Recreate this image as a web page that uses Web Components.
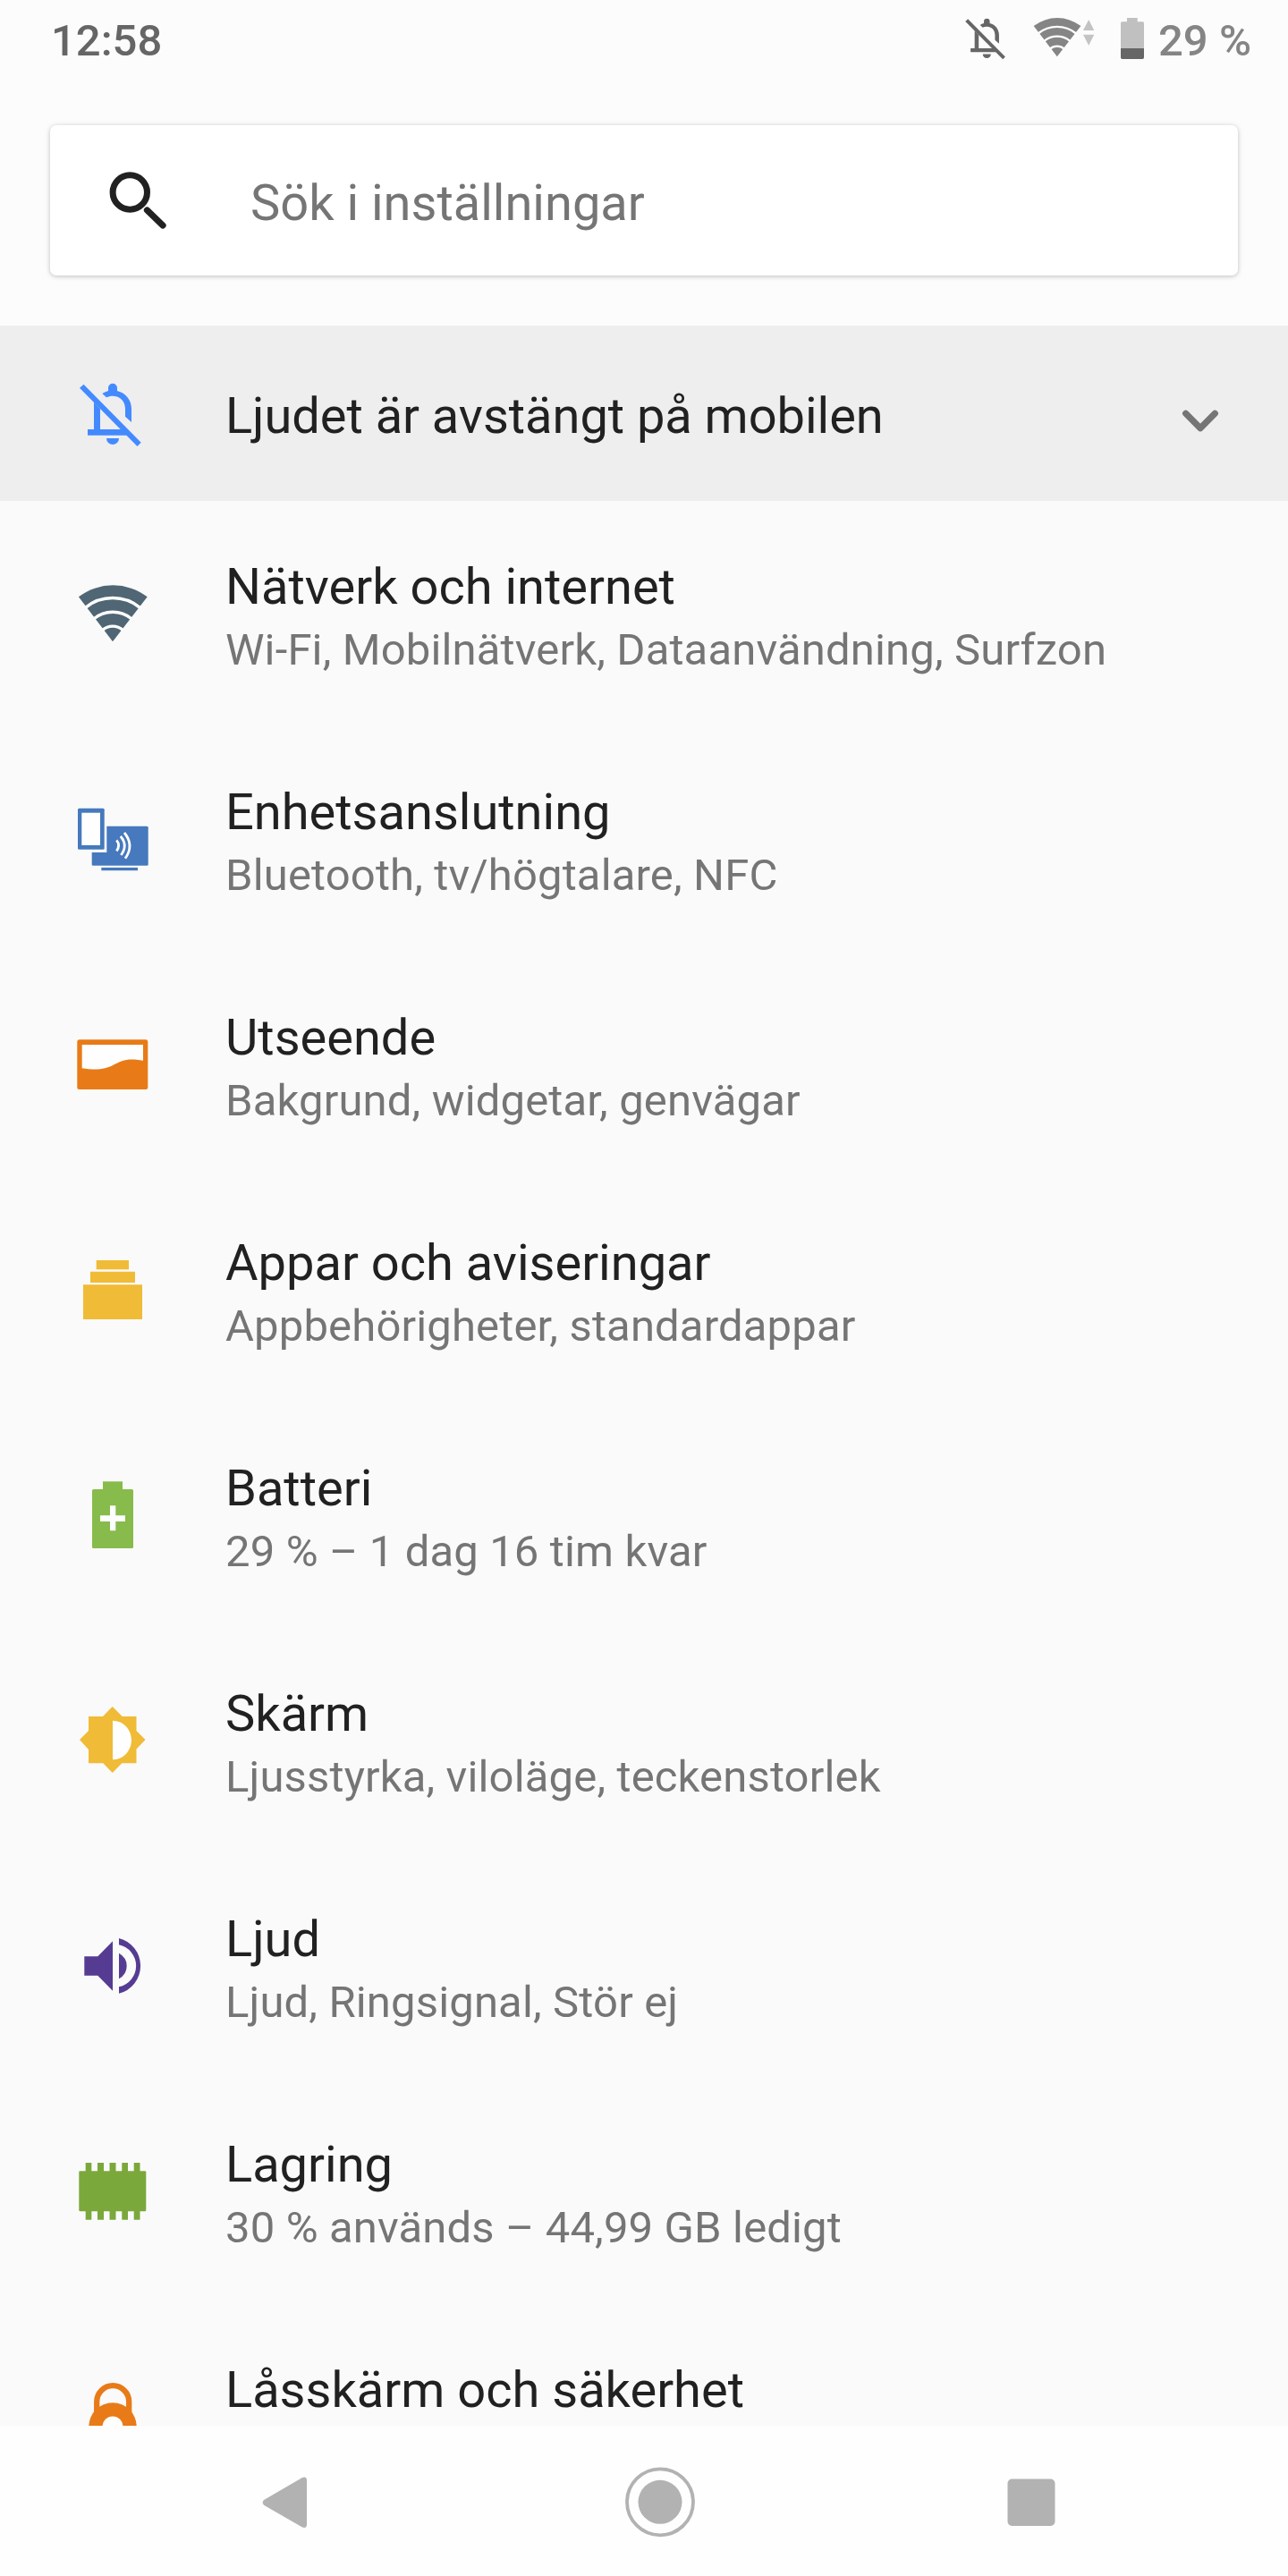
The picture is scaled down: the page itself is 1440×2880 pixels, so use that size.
<!DOCTYPE html>
<html lang="sv">
<head>
<meta charset="utf-8">
<title>Inställningar</title>
<style>
  html, body {
    margin: 0;
    padding: 0;
  }

  body {
    width: 1440px;
    height: 2880px;
    overflow: hidden;
    background: #fafafa;
    font-family: Roboto, "Noto Sans", sans-serif;
  }
</style>
</head>
<body>
<settings-screen>
  <status-bar slot="status" time="12:58" battery="29 %"></status-bar>
  <search-field slot="search">Sök i inställningar</search-field>
  <condition-banner slot="banner">Ljudet är avstängt på mobilen</condition-banner>

  <settings-row icon="wifi" color="#506675">Nätverk och internet<span slot="summary">Wi-Fi, Mobilnätverk, Dataanvändning, Surfzon</span></settings-row>
  <settings-row icon="devices" color="#4679bd">Enhetsanslutning<span slot="summary">Bluetooth, tv/högtalare, NFC</span></settings-row>
  <settings-row icon="wallpaper" color="#e87b17">Utseende<span slot="summary">Bakgrund, widgetar, genvägar</span></settings-row>
  <settings-row icon="apps" color="#f0bb36">Appar och aviseringar<span slot="summary">Appbehörigheter, standardappar</span></settings-row>
  <settings-row icon="battery" color="#87bb4b">Batteri<span slot="summary">29 % – 1 dag 16 tim kvar</span></settings-row>
  <settings-row icon="display" color="#f0bb36">Skärm<span slot="summary">Ljusstyrka, viloläge, teckenstorlek</span></settings-row>
  <settings-row icon="volume" color="#553c92">Ljud<span slot="summary">Ljud, Ringsignal, Stör ej</span></settings-row>
  <settings-row icon="storage" color="#7ba83b">Lagring<span slot="summary">30 % används – 44,99 GB ledigt</span></settings-row>
  <settings-row icon="lock" color="#e87b17">Låsskärm och säkerhet</settings-row>

  <nav-bar slot="nav"></nav-bar>
</settings-screen>

<script>
// All icons are drawn in an 84 x 84 box (24dp at 3.5x).
const ICONS = {
  bellOff: `
    <path d="M5 13.7 9.5 9.7 73.7 74.7 69.5 79Z"/>
    <path d="M21 29.5V60H14v6.7h49L55 60H28V37Z"/>
    <path d="M30.3 20Q33.500 18 37 17V13.700a5 5 0 0 1 10 0V17C57 19.500 63 27.500 63 37.300V52L56 45.700V37C56 28.500 50 22.700 42 22.700 39.500 22.700 37 23.300 35 24.300Z"/>
    <path d="M35 70H49A7 7 0 0 1 35 70Z"/>`,
  wifi: `
    <path d="M42 73.3 3.900 23.300A63.300 63.300 0 0 1 80.700 23.300Z"/>
    <g fill="none" stroke="#fdfeff" stroke-width="3.400">
      <path d="M11.500 35.300A48.700 48.700 0 0 1 72.500 35.300"/>
      <path d="M21 47.800A33 33 0 0 1 63 47.800"/>
      <path d="M30.500 60.500A17.300 17.300 0 0 1 53.500 60.500"/>
    </g>`,
  devices: `
    <rect x="18.7" y="27.700" width="63" height="44" rx="1.500"/>
    <path fill="#fdfdfd" d="M18 27H35.300V57H18Z"/>
    <rect x="3" y="7.700" width="29.700" height="46" rx="1.500"/>
    <path fill="#fefefe" d="M7.300 12.700H28V49H7.300Z"/>
    <path d="M29.300 74H70v3.300H29.300Z"/>
    <g fill="none" stroke="#fff" stroke-width="2.800">
      <path d="M46.300 43.300Q51 49 46.300 55.300"/>
      <path d="M50.800 39Q59.500 49 51.300 60"/>
      <path d="M55 35Q66.500 49 56 63.700"/>
    </g>`,
  wallpaper: `
    <rect x="2.300" y="14.300" width="79" height="55.700" rx="2.500"/>
    <path fill="#fefefe" d="M7.700 20H76V37.700C58 34.500 52.500 37.500 43 42.500 34 47.300 24 49 7.700 46.300Z"/>`,
  apps: `
    <path d="M23.700 9H60V19.300H23.700ZM17 21.700H67V34H17ZM9 36.300H75V75H9Z"/>`,
  battery: `
    <path d="M31 4.300H53V15H31Z"/>
    <rect x="19" y="13" width="46" height="66" rx="1.500"/>
    <path fill="#fefefe" d="M39 31.300h6.300v11h10.700V49H45.300v10.300H39V49H28v-6.700H39Z"/>`,
  display: `
    <path d="M41.700 4 52.700 15H68.500V31L78.500 41 68.500 51.500V67.300H52.300L41.700 78 31.300 67.300H15V52L5 41 15 31V15H31Z"/>
    <path fill="#fefefe" d="M42 19.700A21 21.800 0 0 1 42 63.300Z"/>`,
  volume: `
    <path d="M10.300 31.300H25.300L42 14.300V69.700L25.300 52.700H10.300Z"/>
    <path d="M49 27.700Q57.700 32.500 57.700 42T49 56.300Z"/>
    <path d="M49 11A31.800 31.800 0 0 1 49 72.700V65.300A24 24 0 0 0 49 18.300Z"/>`,
  storage: `
    <rect x="4.300" y="19.300" width="75" height="45" rx="1.200"/>
    <path d="M11.700 10h6.600v63.700h-6.600ZM25 10h7v63.700h-7ZM38.500 10h7v63.700h-7ZM52.300 10h6.700v63.700h-6.700ZM65.700 10h6.800v63.700h-6.800Z"/>`,
  lock: `
    <path fill="none" stroke="currentColor" stroke-width="6.300" d="M24.200 42V25.200A18 18 0 0 1 60.200 25.200V42"/>
    <circle cx="42" cy="53" r="26.700"/>
    <circle cx="42" cy="53" r="11.500" fill="#fefefe"/>`,
  search: `
    <g fill="none" stroke="currentColor">
      <circle cx="33.300" cy="33" r="19.200" stroke-width="7"/>
      <path stroke-width="7.300" stroke-linecap="round" d="M52.500 53 70 70"/>
    </g>`,
  chevron: `
    <path fill="none" stroke="currentColor" stroke-width="7.300" stroke-linecap="round" stroke-linejoin="round" d="M25.700 33.300 42 49.700 58.300 33.300"/>`
};

class PhoneIcon extends HTMLElement {
  connectedCallback() {
    if (this.shadowRoot) return;
    this.attachShadow({ mode: 'open' });
    this.shadowRoot.innerHTML = `
      <style>
        :host {
          display: block;
          flex: none;
          width: 84px;
          height: 84px;
        }
        svg {
          display: block;
          width: 100%;
          height: 100%;
          fill: currentColor;
        }
      </style>
      <svg viewBox="0 0 84 84">${ICONS[this.getAttribute('name')]}</svg>
    `;
  }
}

class SettingsScreen extends HTMLElement {
  constructor() {
    super();
    this.attachShadow({ mode: 'open' });
    this.shadowRoot.innerHTML = `
      <style>
        :host {
          display: flex;
          flex-direction: column;
          width: 1440px;
          height: 2880px;
        }
        header {
          flex: none;
          height: 364px;
          background: #fcfcfc;
        }
        main {
          flex: 1;
          min-height: 0;
          overflow: hidden;
          background: #fafafa;
        }
      </style>
      <header>
        <slot name="status"></slot>
        <slot name="search"></slot>
      </header>
      <slot name="banner"></slot>
      <main><slot></slot></main>
      <slot name="nav"></slot>
    `;
  }
}

class StatusBar extends HTMLElement {
  connectedCallback() {
    if (this.shadowRoot) return;
    this.attachShadow({ mode: 'open' });
    this.shadowRoot.innerHTML = `
      <style>
        :host {
          display: flex;
          align-items: center;
          box-sizing: border-box;
          height: 84px;
          padding: 0 42px 0 57px;
          font-size: 49px;
          font-weight: 500;
          line-height: 58px;
          color: #666;
        }
        .time {
          flex: 1;
          padding-top: 7px;
        }
        .bell {
          width: 54.6px;
          height: 54.6px;
          margin-right: 22.7px;
        }
        .wifi {
          width: 57.7px;
          height: 57.7px;
          color: #858585;
        }
        svg {
          display: block;
          flex: none;
        }
        .level {
          width: 103px;
          padding-top: 7px;
          margin-left: 15px;
          color: #858585;
          white-space: nowrap;
        }
      </style>
      <span class="time">${this.getAttribute('time')}</span>
      <phone-icon class="bell" name="bellOff"></phone-icon>
      <phone-icon class="wifi" name="wifi"></phone-icon>
      <svg width="42" height="84" viewBox="0 0 42 84" fill="#c3c3c3">
        <path d="M0 34 6.200 22 12.300 34ZM0 38.700H12.300L6.200 50.700Z"/>
      </svg>
      <svg width="27" height="84" viewBox="0 0 27 84">
        <path fill="#c0c0c0" d="M7 20H18.700V24.300H24.500Q26 24.300 26 25.800V55H0V25.800Q0 24.300 1.500 24.300H7Z"/>
        <path fill="#666" d="M0 54H26V64Q26 66 24.500 66H1.500Q0 66 0 64Z"/>
      </svg>
      <span class="level">${this.getAttribute('battery')}</span>
    `;
  }
}

class SearchField extends HTMLElement {
  constructor() {
    super();
    this.attachShadow({ mode: 'open' });
    this.shadowRoot.innerHTML = `
      <style>
        :host {
          display: flex;
          align-items: center;
          gap: 84px;
          box-sizing: border-box;
          height: 168px;
          margin: 56px 56px 0;
          padding: 0 56px;
          border-radius: 7px;
          background: #fff;
          box-shadow: 0 1px 5px rgba(0, 0, 0, .22), 0 0 12px rgba(0, 0, 0, .04);
          font-size: 56px;
          line-height: 66px;
          color: #757575;
        }
        phone-icon {
          color: #212121;
        }
        span {
          padding-top: 6px;
        }
      </style>
      <phone-icon name="search"></phone-icon>
      <span><slot></slot></span>
    `;
  }
}

class ConditionBanner extends HTMLElement {
  constructor() {
    super();
    this.attachShadow({ mode: 'open' });
    this.shadowRoot.innerHTML = `
      <style>
        :host {
          display: flex;
          flex: none;
          align-items: center;
          gap: 84px;
          box-sizing: border-box;
          height: 196px;
          padding: 0 56px 0 84px;
          background: #eee;
          font-size: 56px;
          line-height: 66px;
          letter-spacing: -.04px;
          color: #212121;
        }
        .bell {
          color: #448aff;
        }
        .title {
          flex: 1;
          padding-top: 6px;
        }
        .chevron {
          margin-top: 17px;
          color: #757575;
        }
      </style>
      <phone-icon class="bell" name="bellOff"></phone-icon>
      <span class="title"><slot></slot></span>
      <phone-icon class="chevron" name="chevron"></phone-icon>
    `;
  }
}

class SettingsRow extends HTMLElement {
  connectedCallback() {
    if (this.shadowRoot) return;
    this.attachShadow({ mode: 'open' });
    this.shadowRoot.innerHTML = `
      <style>
        :host {
          display: flex;
          align-items: flex-start;
          gap: 84px;
          box-sizing: border-box;
          height: 252px;
          padding: 63px 56px 0 84px;
          white-space: nowrap;
        }
        phone-icon {
          margin-top: 21px;
          color: ${this.getAttribute('color')};
        }
        .title {
          font-size: 56px;
          line-height: 66px;
          color: #212121;
        }
        .summary {
          margin-top: 5px;
          font-size: 49px;
          line-height: 66px;
          letter-spacing: .15px;
          color: #757575;
        }
      </style>
      <phone-icon name="${this.getAttribute('icon')}"></phone-icon>
      <div>
        <div class="title"><slot></slot></div>
        <div class="summary"><slot name="summary"></slot></div>
      </div>
    `;
  }
}

class NavBar extends HTMLElement {
  constructor() {
    super();
    this.attachShadow({ mode: 'open' });
    this.shadowRoot.innerHTML = `
      <style>
        :host {
          display: flex;
          flex: none;
          align-items: center;
          justify-content: space-between;
          box-sizing: border-box;
          height: 168px;
          padding: 0 245px 0 276px;
          background: #fefefe;
        }
        svg {
          display: block;
          width: 84px;
          height: 84px;
          fill: #b2b2b2;
        }
      </style>
      <svg viewBox="0 0 84 84"><path d="M19 40.900 62 16Q66.700 14.500 67 18.900V68.700Q66.700 73.100 62 71.600L19 46.700Q16.300 43.800 19 40.900Z"/></svg>
      <svg viewBox="0 0 84 84"><circle cx="44" cy="43.300" r="24.500"/><circle cx="44" cy="43.300" r="37" fill="none" stroke="#b2b2b2" stroke-width="3.800"/></svg>
      <svg viewBox="0 0 84 84"><rect x="15.500" y="17.500" width="53" height="52.500" rx="5"/></svg>
    `;
  }
}

customElements.define('phone-icon', PhoneIcon);
customElements.define('settings-screen', SettingsScreen);
customElements.define('status-bar', StatusBar);
customElements.define('search-field', SearchField);
customElements.define('condition-banner', ConditionBanner);
customElements.define('settings-row', SettingsRow);
customElements.define('nav-bar', NavBar);
</script>
</body>
</html>
